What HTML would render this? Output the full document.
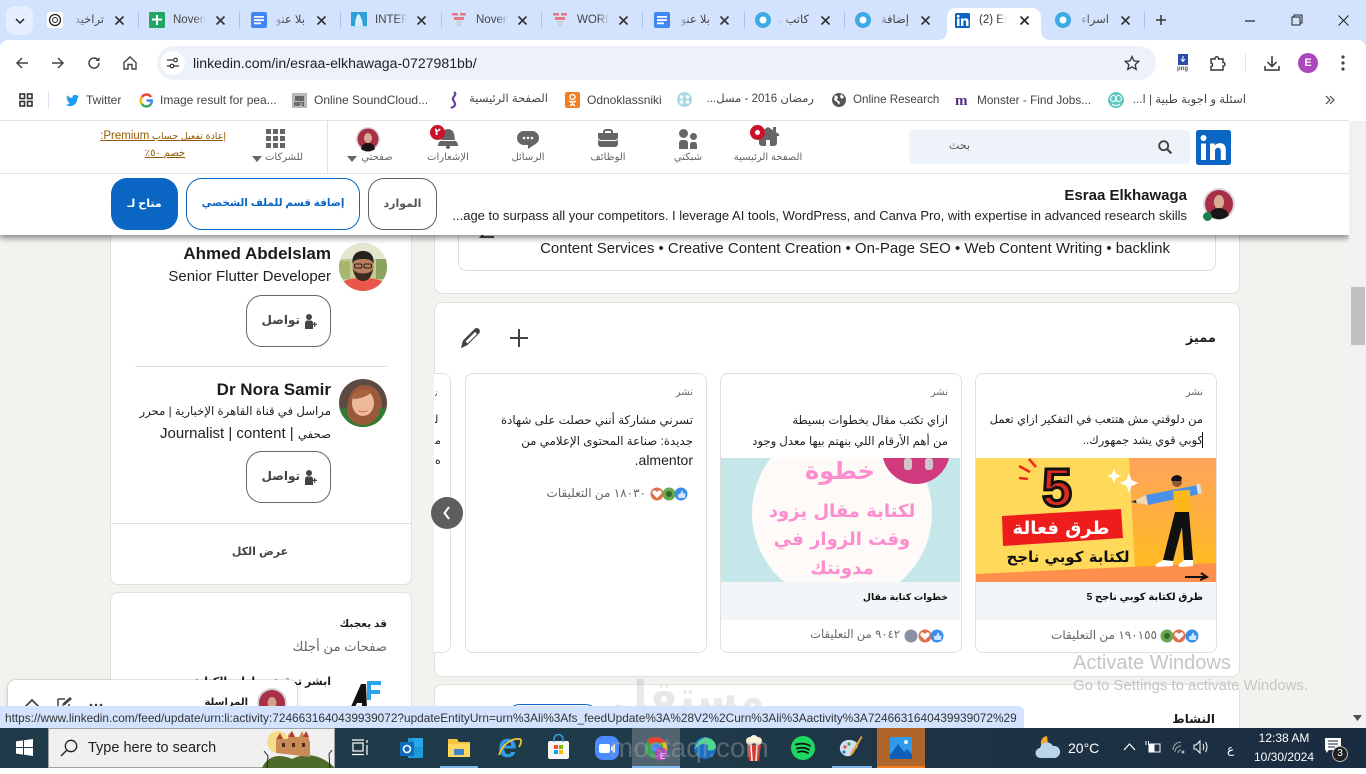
<!DOCTYPE html>
<html lang="en">
<head>
<meta charset="utf-8">
<title>LinkedIn</title>
<style>
*{box-sizing:border-box}
html,body{margin:0;padding:0;width:1366px;height:774px;overflow:hidden;background:#fff;font-family:"Liberation Sans","DejaVu Sans",sans-serif}
.a{position:absolute}
.t{position:absolute;white-space:nowrap;line-height:1.2;color:#1f1f1f}
.r{direction:rtl;text-align:right}
svg{position:absolute;overflow:visible}
.card{position:absolute;background:#fff;border:1px solid #e0dfdc;border-radius:8px}
.tabt{position:absolute;top:13px;font-size:11.5px;color:#444;white-space:nowrap;overflow:hidden;height:15px;line-height:15px}
.sep{position:absolute;top:12px;width:1px;height:16px;background:#a8c3ec}
.x{position:absolute;top:14px;width:11px;height:11px}
.fc{position:absolute;background:#fff;border:1px solid #e0dfdc;border-radius:8px;top:373px;width:242px;height:280px;overflow:hidden}
.btn{position:absolute;border:1px solid #666;border-radius:16px;background:#fff}
.nl{position:absolute;font-size:10px;color:#666;white-space:nowrap;direction:rtl;transform:translateX(-50%);top:152px}
</style>
</head>
<body>

<!-- PAGE BG -->
<div class="a" style="left:0;top:121px;width:1349px;height:607px;background:#f4f2ee"></div>

<!-- LEFT CARD 1 -->
<div class="card" style="left:110px;top:200px;width:302px;height:385px"></div>
<svg style="left:339px;top:243px" width="48" height="48" viewBox="0 0 48 48"><defs><clipPath id="c1"><circle cx="24" cy="24" r="24"/></clipPath></defs><g clip-path="url(#c1)"><rect width="48" height="48" fill="#c3cc97"/><rect width="48" height="16" fill="#e4e6cf"/><rect x="0" y="18" width="11" height="18" fill="#a8b56e"/><rect x="37" y="16" width="11" height="20" fill="#8aa35f"/><path d="M0 48V42c6-6 14-7 24-7s18 1 24 7v6z" fill="#e8574a"/><ellipse cx="24" cy="24" rx="10.500" ry="13" fill="#b97f5a"/><path d="M13.500 21c-1-9 4-13 10.500-13s11.500 4 10.500 13c-1-3-3-5-10.500-5s-9.500 2-10.500 5z" fill="#26221f"/><path d="M14 26c1.500 9 5.500 12 10 12s8.500-3 10-12c-2 3-5 4.500-10 4.500s-8-1.500-10-4.500z" fill="#3a2a20"/><rect x="15.500" y="21" width="7.500" height="4" rx="1.500" fill="none" stroke="#222"/><rect x="25" y="21" width="7.500" height="4" rx="1.500" fill="none" stroke="#222"/></g></svg>
<div class="t" style="right:1035px;top:244px;font-size:17px;font-weight:700;color:#1b1b1b">Ahmed Abdelslam</div>
<div class="t" style="right:1035px;top:268px;font-size:15px;color:#1f1f1f">Senior Flutter Developer</div>
<div class="btn" style="left:246px;top:295px;width:85px;height:52px"></div>
<div class="t r" style="left:262px;top:313px;font-size:12px;font-weight:700;color:#444;width:38px">تواصل</div>
<svg style="left:302px;top:313px" width="16" height="16" viewBox="0 0 16 16" fill="#444"><circle cx="7" cy="4" r="3"/><path d="M3 16V10c0-1.500 1-2.500 2.500-2.500h3c1.500 0 2.500 1 2.500 2.500v6z"/><path d="M12 9h1.200v1.800H15V12h-1.800v1.800H12V12h-1.800v-1.200H12z"/></svg>
<div class="a" style="left:135px;top:366px;width:252px;height:1px;background:#e0dfdc"></div>
<svg style="left:339px;top:379px" width="48" height="48" viewBox="0 0 48 48"><defs><clipPath id="c2"><circle cx="24" cy="24" r="24"/></clipPath></defs><g clip-path="url(#c2)"><rect width="48" height="48" fill="#5c4b43"/><path d="M8 48C6 20 12 6 26 6s20 14 16 42z" fill="#9a5a3a"/><ellipse cx="24" cy="24" rx="11" ry="13" fill="#edb99b"/><path d="M14 20c2-9 10-12 19-7-4 4-12 7-19 7z" fill="#a8623e"/><path d="M19 31c3 2 7 2 10 0-1 3-9 3-10 0z" fill="#c8574f"/><path d="M0 30a24 24 0 0048 0l-7-1a17 17 0 01-34 0z" fill="#2e7d32"/></g></svg>
<div class="t" style="right:1035px;top:380px;font-size:17px;font-weight:700;color:#1b1b1b">Dr Nora Samir</div>
<div class="t r" style="right:1035px;top:405px;font-size:11.700px">مراسل في قناة القاهرة الإخبارية | محرر</div>
<div class="t r" style="right:1035px;top:425px;font-size:15px"><span style="font-size:11.700px">صحفي</span> | Journalist | content</div>
<div class="btn" style="left:246px;top:451px;width:85px;height:52px"></div>
<div class="t r" style="left:262px;top:469px;font-size:12px;font-weight:700;color:#444;width:38px">تواصل</div>
<svg style="left:302px;top:469px" width="16" height="16" viewBox="0 0 16 16" fill="#444"><circle cx="7" cy="4" r="3"/><path d="M3 16V10c0-1.500 1-2.500 2.500-2.500h3c1.500 0 2.500 1 2.500 2.500v6z"/><path d="M12 9h1.200v1.800H15V12h-1.800v1.800H12V12h-1.800v-1.200H12z"/></svg>
<div class="a" style="left:111px;top:523px;width:300px;height:1px;background:#e0dfdc"></div>
<div class="t r" style="left:222px;top:546px;width:76px;text-align:center;font-size:11px;font-weight:700;color:#444">عرض الكل</div>

<!-- LEFT CARD 2 -->
<div class="card" style="left:110px;top:592px;width:302px;height:160px"></div>
<div class="t r" style="right:979px;top:618px;font-size:10.500px;font-weight:700">قد يعجبك</div>
<div class="t r" style="right:979px;top:639px;font-size:13.200px;color:#666">صفحات من أجلك</div>
<div class="t r" style="right:1035px;top:676px;font-size:11px;font-weight:700">ابشر ترقية مهارات الكتابة</div>
<svg style="left:349px;top:680px" width="32" height="32" viewBox="0 0 32 32"><path d="M1 29 12 4h5l1 25h-5v-6H8l-3 6z" fill="#111"/><path d="M18 1h14v4H22v5h9v4h-9v6h-4z" fill="#2aa4e8"/></svg>

<!-- MAIN CARD 1 (top) -->
<div class="card" style="left:434px;top:200px;width:806px;height:94px"></div>
<div class="a" style="left:458px;top:200px;width:758px;height:71px;border:1px solid #e0dfdc;border-radius:8px"></div>
<svg style="left:478px;top:228px" width="18" height="14" viewBox="0 0 18 14"><path d="M16 9H3l4-4" fill="none" stroke="#333" stroke-width="1.800"/></svg>
<div class="t" style="right:196px;top:240px;font-size:15px;color:#1f1f1f">Content Services • Creative Content Creation • On-Page SEO • Web Content Writing • backlink</div>

<!-- MAIN CARD 2 (featured) -->
<div class="card" style="left:434px;top:302px;width:806px;height:375px"></div>
<div class="t r" style="right:150px;top:330px;font-size:13px;font-weight:700;color:#1b1b1b">مميز</div>
<svg style="left:509px;top:328px" width="20" height="20" viewBox="0 0 20 20"><path d="M10 1v18M1 10h18" stroke="#444" stroke-width="2" fill="none"/></svg>
<svg style="left:460px;top:327px" width="22" height="22" viewBox="0 0 22 22"><path d="M2 20l1.500-6L15 2.500c1-1 2.500-1 3.500 0s1 2.500 0 3.500L7 17.500z" fill="#444" stroke="#444" stroke-width="1.400"/><path d="M5.500 14.500 15 5l2 2L7.500 16.500z" fill="#fff"/></svg>

<!-- FEATURED CARD A -->
<div class="fc" style="left:975px"></div>
<div class="t r" style="right:163px;top:387px;font-size:10px;color:#666">نشر</div>
<div class="t r" style="right:163px;top:410px;font-size:11.500px;line-height:21px">من دلوقتي مش هتتعب في التفكير ازاي تعمل<br>كوبي قوي يشد جمهورك..</div>
<div class="a" style="left:1202px;top:432px;width:1px;height:16px;background:#111"></div>
<svg style="left:976px;top:458px" width="240" height="124" viewBox="0 0 240 124"><defs><linearGradient id="og" x1="0" y1="0" x2="0" y2="1"><stop offset="0" stop-color="#ffa35c"/><stop offset="1" stop-color="#ffbb22"/></linearGradient><clipPath id="cl1"><rect width="240" height="124"/></clipPath></defs><g clip-path="url(#cl1)"><rect width="240" height="124" fill="#ffd95a"/><path d="M153 0H240V106L159 110z" fill="url(#og)"/><path d="M0 116 240 105V124H0z" fill="#ff8f4c"/><path d="M43 8l11 6M53 1l7 8M43 20l9 1" stroke="#f0261c" stroke-width="2.500"/><text x="81" y="48" text-anchor="middle" font-family="Liberation Sans" font-weight="700" font-size="54" fill="#d92a20" stroke="#111" stroke-width="3">5</text><path d="M138 11l2 5 5 2-5 2-2 5-2-5-5-2 5-2z" fill="#fff"/><path d="M153 15l2.500 7 7 3-7 3-2.500 7-2.500-7-7-3 7-3z" fill="#fff"/><path d="M26 58 145 51 147 80 27 88z" fill="#ef1c1c"/><text x="85" y="76" text-anchor="middle" font-family="DejaVu Sans" font-weight="700" font-size="18" fill="#fff" direction="rtl">طرق فعالة</text><text x="92" y="104" text-anchor="middle" font-family="DejaVu Sans" font-weight="700" font-size="15" fill="#111" direction="rtl">لكتابة كوبي ناجح</text><path d="M155 44 170 37 222 27 224 36 172 47z" fill="#4a90e8"/><path d="M155 44 170 37 172 47z" fill="#f4d9b0"/><path d="M155 44 160 42 160.500 45z" fill="#222"/><rect x="221" y="26" width="4" height="10" fill="#ddd" transform="rotate(-10 223 31)"/><circle cx="201" cy="24" r="5" fill="#8a5a3a"/><path d="M195 22a6 6 0 0 1 11-2l-1 3-9 0z" fill="#111"/><path d="M197 33 214 32 215 54 199 54z" fill="#fcb71b"/><path d="M199 54 187 102 197 103 206 69 208 102 217 102 213 54z" fill="#111"/><path d="M187 102l-8 5 2 2 16-1v-5zM208 102l-6 5 2 2 13-1v-6z" fill="#fff"/><path d="M209 119h22M225 115l6 4-7 3" stroke="#111" stroke-width="2" fill="none"/></g></svg>
<div class="a" style="left:976px;top:582px;width:240px;height:38px;background:#f3f6f8"></div>
<div class="t r" style="right:163px;top:592px;font-size:10px;font-weight:700;color:#111">طرق لكتابة كوبي ناجح 5</div>
<svg style="left:1160px;top:629px" width="38" height="14" viewBox="0 0 38 14"><circle cx="7" cy="7" r="6.500" fill="#6aa84f"/><circle cx="7" cy="7" r="3" fill="#2e6b2f"/><circle cx="19" cy="7" r="6.500" fill="#df704d"/><path d="M19 11l-4-4a2 2 0 013-3l1 1 1-1a2 2 0 013 3z" fill="#fff"/><circle cx="32" cy="7" r="6.500" fill="#378fe9"/><path d="M29 7h2l2-3.500 1 .5v2.500h2.500l-.5 4.500h-5l-2-.5z" fill="#d0e8ff"/></svg>
<div class="t r" style="right:209px;top:628px;font-size:12px;color:#666">١٩٠١٥٥ من التعليقات</div>

<!-- FEATURED CARD B -->
<div class="fc" style="left:720px"></div>
<div class="t r" style="right:418px;top:387px;font-size:10px;color:#666">نشر</div>
<div class="t r" style="right:418px;top:410px;font-size:11.600px;line-height:21px">ازاي تكتب مقال بخطوات بسيطة<br>من أهم الأرقام اللي بنهتم بيها معدل وجود</div>
<svg style="left:721px;top:458px" width="239" height="124" viewBox="0 0 239 124"><defs><clipPath id="cl2"><rect width="239" height="124"/></clipPath></defs><g clip-path="url(#cl2)"><rect width="239" height="124" fill="#c6e7ea"/><circle cx="121" cy="55" r="90" fill="#fdfaf8"/><circle cx="195" cy="-8" r="34" fill="#d03b80"/><rect x="183" y="0" width="8" height="12" rx="3" fill="#cfc5c8"/><rect x="204" y="0" width="8" height="12" rx="3" fill="#cfc5c8"/><g font-family="DejaVu Sans" font-weight="700" text-anchor="middle" fill="#fd8dce" direction="rtl"><text x="119" y="21" font-size="24">خطوة</text><text x="121" y="59" font-size="18">لكتابة مقال يزود</text><text x="121" y="87" font-size="18">وقت الزوار في</text><text x="121" y="116" font-size="18">مدونتك</text></g></g></svg>
<div class="a" style="left:721px;top:582px;width:239px;height:38px;background:#f3f6f8"></div>
<div class="t r" style="right:418px;top:592px;font-size:9.300px;font-weight:700;color:#111">خطوات كتابة مقال</div>
<svg style="left:905px;top:629px" width="38" height="14" viewBox="0 0 38 14"><circle cx="6" cy="7" r="6.500" fill="#8a8fa3"/><circle cx="20" cy="7" r="6.500" fill="#df704d"/><path d="M20 11l-4-4a2 2 0 013-3l1 1 1-1a2 2 0 013 3z" fill="#fff"/><circle cx="32" cy="7" r="6.500" fill="#378fe9"/><path d="M29 7h2l2-3.500 1 .5v2.500h2.500l-.5 4.500h-5l-2-.5z" fill="#d0e8ff"/></svg>
<div class="t r" style="right:466px;top:628px;font-size:11.600px;color:#666">٩٠٤٢ من التعليقات</div>

<!-- FEATURED CARD C -->
<div class="fc" style="left:465px"></div>
<div class="t r" style="right:673px;top:387px;font-size:10px;color:#666">نشر</div>
<div class="t r" style="right:673px;top:410px;font-size:11.800px;line-height:21px">تسرني مشاركة أنني حصلت على شهادة<br>جديدة: صناعة المحتوى الإعلامي من</div>
<div class="t" style="right:673px;top:452px;font-size:14px;color:#1f1f1f">.almentor</div>
<svg style="left:650px;top:487px" width="38" height="14" viewBox="0 0 38 14"><circle cx="7" cy="7" r="6.500" fill="#df704d"/><path d="M7 11l-4-4a2 2 0 013-3l1 1 1-1a2 2 0 013 3z" fill="#fff"/><circle cx="19" cy="7" r="6.500" fill="#6aa84f"/><circle cx="19" cy="7" r="3" fill="#2e6b2f"/><circle cx="31" cy="7" r="6.500" fill="#378fe9"/><path d="M28 7h2l2-3.500 1 .5v2.500h2.500l-.5 4.500h-5l-2-.5z" fill="#d0e8ff"/></svg>
<div class="t r" style="right:720px;top:486px;font-size:12px;color:#666">١٨٠٣٠ من التعليقات</div>

<!-- FEATURED CARD D partial -->
<div class="a" style="left:434px;top:373px;width:17px;height:280px;background:#fff;border:1px solid #e0dfdc;border-left:none;border-radius:0 8px 8px 0"></div>
<div class="t" style="left:435px;top:388px;font-size:10px;color:#666">ﻧ</div>
<div class="t" style="left:435px;top:414px;font-size:11px">ﻟ</div>
<div class="t" style="left:435px;top:435px;font-size:11px">ﻣ</div>
<div class="t" style="left:435px;top:455px;font-size:11px">ﻩ</div>

<!-- PREV BTN -->
<div class="a" style="left:431px;top:497px;width:32px;height:32px;border-radius:50%;background:#5e5e5e"></div>
<svg style="left:431px;top:497px" width="32" height="32" viewBox="0 0 32 32"><path d="M18 10l-4.500 6 4.500 6" fill="none" stroke="#fff" stroke-width="2"/></svg>

<!-- ACTIVITY CARD -->
<div class="card" style="left:434px;top:684px;width:806px;height:80px"></div>
<div class="t r" style="right:151px;top:712px;font-size:12px;font-weight:700;color:#1b1b1b">النشاط</div>
<div class="a" style="left:505px;top:704px;width:95px;height:30px;border:1px solid #0a66c2;border-radius:16px;background:#fff"></div>

<!-- MESSAGING OVERLAY -->
<div class="a" style="left:8px;top:680px;width:289px;height:60px;background:#fff;border-radius:8px 8px 0 0;box-shadow:0 0 0 1px rgba(0,0,0,.08),0 2px 6px rgba(0,0,0,.15)"></div>
<svg style="left:257px;top:688px" width="30" height="30" viewBox="0 0 30 30"><circle cx="15" cy="15" r="15" fill="#d5d5d5"/><circle cx="15" cy="15" r="13" fill="#a82f48"/><ellipse cx="15" cy="15" rx="4.500" ry="6" fill="#d4a184"/></svg>
<div class="t r" style="right:1118px;top:697px;font-size:10px;font-weight:700">المراسلة</div>
<svg style="left:24px;top:698px" width="16" height="10" viewBox="0 0 16 10"><path d="M1 9l7-7 7 7" fill="none" stroke="#444" stroke-width="1.800"/></svg>
<svg style="left:57px;top:696px" width="15" height="15" viewBox="0 0 15 15"><path d="M1 3h7M1 3v11h11V8" fill="none" stroke="#444" stroke-width="1.500"/><path d="M5 10l1-3 7-6 2 2-7 6z" fill="#444"/></svg>
<svg style="left:89px;top:703px" width="14" height="4" viewBox="0 0 14 4" fill="#444"><circle cx="2" cy="2" r="1.300"/><circle cx="7" cy="2" r="1.300"/><circle cx="12" cy="2" r="1.300"/></svg>

<!-- STICKY BAR + LI HEADER -->
<div class="a" style="left:0;top:174px;width:1349px;height:61px;background:#fff;box-shadow:0 3px 6px rgba(0,0,0,.45)"></div>
<div class="a" style="left:0;top:121px;width:1349px;height:52px;background:#fff"></div>
<div class="a" style="left:0;top:173px;width:1349px;height:1px;background:#e3e2df"></div>
<div class="a" style="left:0;top:120px;width:1349px;height:1px;background:#e3e3e3"></div>

<svg style="left:1196px;top:130px" width="35" height="35" viewBox="0 0 35 35"><rect width="35" height="35" rx="2.500" fill="#0a66c2"/><rect x="5" y="13.500" width="5" height="16.500" fill="#fff"/><circle cx="7.500" cy="8" r="3" fill="#fff"/><path d="M14 13.500h4.800v2.300c1-1.700 2.800-2.700 5-2.700 4.300 0 6 2.700 6 7V30h-5v-8.800c0-2-.7-3.500-2.600-3.500-2 0-3.200 1.400-3.200 3.500V30h-5z" fill="#fff"/></svg>
<div class="a" style="left:909px;top:130px;width:281px;height:34px;background:#edf3f8;border-radius:4px"></div>
<div class="t r" style="right:396px;top:140px;font-size:11px;color:#555">بحث</div>
<svg style="left:1158px;top:140px" width="14" height="14" viewBox="0 0 14 14"><circle cx="5.700" cy="5.700" r="4.500" fill="none" stroke="#444" stroke-width="1.900"/><path d="M9 9l4.300 4.300" stroke="#444" stroke-width="2.200"/></svg>

<!-- nav -->
<svg style="left:756px;top:125px" width="24" height="24" viewBox="0 0 24 24" fill="#666"><path d="M23 9v2h-2v7a3 3 0 01-3 3h-4v-6h-4v6H6a3 3 0 01-3-3v-7H1V9l11-7 5 3.180V2h3v5.090z"/></svg>
<div class="a" style="left:750px;top:125px;width:15px;height:15px;border-radius:50%;background:#cb112d"></div>
<div class="a" style="left:755px;top:130px;width:5px;height:5px;border-radius:50%;background:#fff"></div>
<div class="nl" style="left:768px">الصفحة الرئيسية</div>
<svg style="left:676px;top:127px" width="24" height="24" viewBox="0 0 24 24" fill="#666"><path d="M12 16v6H3v-6a3 3 0 013-3h3a3 3 0 013 3zm5.500-3A3.500 3.500 0 1014 9.500a3.500 3.500 0 003.500 3.500zm1 2h-2a2.500 2.500 0 00-2.500 2.500V22h7v-4.500a2.500 2.500 0 00-2.500-2.500zM7.500 2A4.500 4.500 0 1012 6.500 4.490 4.490 0 007.500 2z"/></svg>
<div class="nl" style="left:688px">شبكتي</div>
<svg style="left:596px;top:127px" width="24" height="24" viewBox="0 0 24 24" fill="#666"><path d="M17 6V5a3 3 0 00-3-3h-4a3 3 0 00-3 3v1H2v4a3 3 0 003 3h14a3 3 0 003-3V6zM9 5a1 1 0 011-1h4a1 1 0 011 1v1H9zm10 9a4 4 0 003-1.380V17a3 3 0 01-3 3H5a3 3 0 01-3-3v-4.380A4 4 0 005 14z"/></svg>
<div class="nl" style="left:608px">الوظائف</div>
<svg style="left:516px;top:127px" width="24" height="24" viewBox="0 0 24 24" fill="#666"><path d="M16 4H8a7 7 0 000 14h4v4l8.160-5.390A6.780 6.780 0 0023 11a7 7 0 00-7-7zm-8 8.250A1.250 1.250 0 119.250 11 1.250 1.250 0 018 12.250zm4 0A1.250 1.250 0 1113.250 11 1.250 1.250 0 0112 12.250zm4 0A1.250 1.250 0 1117.250 11 1.250 1.250 0 0116 12.250z"/></svg>
<div class="nl" style="left:528px">الرسائل</div>
<svg style="left:436px;top:127px" width="24" height="24" viewBox="0 0 24 24" fill="#666"><path d="M22 19h-8.280a2 2 0 11-3.440 0H2v-1a4.520 4.520 0 011.170-2.830l1-1.170h15.700l1 1.170A4.420 4.420 0 0122 18zM18.210 7.440A6.270 6.270 0 0012 2a6.270 6.270 0 00-6.210 5.440L5 13h14z"/></svg>
<div class="a" style="left:430px;top:125px;width:15px;height:15px;border-radius:50%;background:#cb112d;color:#fff;font-size:10px;font-weight:700;line-height:15px;text-align:center">٢</div>
<div class="nl" style="left:448px">الإشعارات</div>
<svg style="left:356px;top:127px" width="24" height="24" viewBox="0 0 24 24"><circle cx="12" cy="12" r="12" fill="#d8d8d8"/><circle cx="12" cy="12" r="10.500" fill="#a82f48"/><ellipse cx="12" cy="11" rx="4" ry="5" fill="#d8ac90"/><path d="M5 22c1-5 4-6 7-6s6 1 7 6a11 11 0 01-14 0z" fill="#1b1414"/></svg>
<div class="nl" style="left:377px">صفحتي</div>
<svg style="left:347px;top:156px" width="10" height="6" viewBox="0 0 10 6"><path d="M0 0h10L5 6z" fill="#666"/></svg>
<div class="a" style="left:327px;top:121px;width:1px;height:52px;background:#e3e2df"></div>
<svg style="left:266px;top:129px" width="19" height="19" viewBox="0 0 19 19" fill="#666"><rect width="5" height="5"/><rect x="7" width="5" height="5"/><rect x="14" width="5" height="5"/><rect y="7" width="5" height="5"/><rect x="7" y="7" width="5" height="5"/><rect x="14" y="7" width="5" height="5"/><rect y="14" width="5" height="5"/><rect x="7" y="14" width="5" height="5"/><rect x="14" y="14" width="5" height="5"/></svg>
<div class="nl" style="left:284px">للشركات</div>
<svg style="left:252px;top:156px" width="10" height="6" viewBox="0 0 10 6"><path d="M0 0h10L5 6z" fill="#666"/></svg>
<div class="t r" style="right:1140px;top:130px;font-size:9.500px;color:#915907;text-decoration:underline">إعادة تفعيل حساب <span style="font-size:11.500px">Premium:</span></div>
<div class="t r" style="left:135px;top:148px;width:60px;text-align:center;font-size:10px;color:#915907;text-decoration:underline">خصم ٥٠٪</div>

<!-- sticky contents -->
<svg style="left:1203px;top:188px" width="32" height="32" viewBox="0 0 32 32"><circle cx="16" cy="16" r="16" fill="#d8d8d8"/><circle cx="16" cy="16" r="14" fill="#a82f48"/><ellipse cx="16" cy="14" rx="5" ry="7" fill="#d8ac90"/><path d="M6 27c2-5 6-7 10-7s8 2 10 7a14 14 0 01-20 0z" fill="#1b1414"/></svg>
<div class="a" style="left:1203px;top:212px;width:9px;height:9px;border-radius:50%;background:#1a7f4e;border:0 solid #fff"></div>
<div class="t" style="right:179px;top:187px;font-size:15px;font-weight:700;color:#1b1b1b">Esraa Elkhawaga</div>
<div class="t" style="right:179px;top:208px;font-size:13px;color:#1f1f1f">...age to surpass all your competitors. I leverage AI tools, WordPress, and Canva Pro, with expertise in advanced research skills</div>
<div class="a" style="left:368px;top:178px;width:69px;height:52px;border:1px solid #5f5f5f;border-radius:16px;background:#fff"></div>
<div class="t r" style="left:368px;top:198px;width:69px;text-align:center;font-size:11px;font-weight:700;color:#555">الموارد</div>
<div class="a" style="left:186px;top:178px;width:174px;height:52px;border:1px solid #0a66c2;border-radius:16px;background:#fff"></div>
<div class="t r" style="left:186px;top:198px;width:174px;text-align:center;font-size:10.400px;font-weight:700;color:#0a66c2">إضافة قسم للملف الشخصي</div>
<div class="a" style="left:111px;top:178px;width:67px;height:52px;border-radius:16px;background:#0a66c2"></div>
<div class="t r" style="left:111px;top:198px;width:67px;text-align:center;font-size:11px;font-weight:700;color:#fff">متاح لـ</div>

<!-- SCROLLBAR -->
<div class="a" style="left:1349px;top:121px;width:17px;height:607px;background:#f1f1f1"></div>
<div class="a" style="left:1351px;top:287px;width:14px;height:58px;background:#c1c1c1"></div>
<svg style="left:1353px;top:715px" width="9" height="6" viewBox="0 0 9 6"><path d="M0 0h9L4.500 6z" fill="#505050"/></svg>

<!-- ACTIVATE -->
<div class="t" style="left:1073px;top:651px;font-size:20px;color:#c5c5c5">Activate Windows</div>
<div class="t" style="left:1073px;top:678px;font-size:14.900px;color:#c5c5c5">Go to Settings to activate Windows.</div>

<!-- WATERMARK UPPER -->
<div class="t r" style="left:600px;top:672px;width:165px;font-size:42px;font-weight:700;color:rgba(120,120,120,.17)">مستقل</div>

<!-- STATUS BUBBLE -->
<div class="a" style="left:0;top:706px;width:1024px;height:22px;background:#d3e3fd;border-radius:0 6px 0 0"></div>
<div class="t" style="left:5px;top:711px;font-size:11.850px;color:#333">https://www.linkedin.com/feed/update/urn:li:activity:7246631640439939072?updateEntityUrn=urn%3Ali%3Afs_feedUpdate%3A%28V2%2Curn%3Ali%3Aactivity%3A7246631640439939072%29</div>

<!-- TASKBAR -->
<div class="a" style="left:0;top:728px;width:1366px;height:40px;background:linear-gradient(90deg,#1f3b49 0%,#1f3a48 50%,#1b2b40 100%)"></div>
<svg style="left:16px;top:739px" width="17" height="17" viewBox="0 0 17 17" fill="#fff"><path d="M0 2.400 7 1.400V8H0zM8 1.300 17 0V8H8zM0 9h7v6.600L0 14.600zM8 9h9v8L8 15.700z"/></svg>
<div class="a" style="left:48px;top:728px;width:287px;height:40px;background:#f0f0f0;border:1px solid #9aa3a8"></div>
<svg style="left:60px;top:739px" width="18" height="18" viewBox="0 0 18 18"><circle cx="11" cy="7" r="5.700" fill="none" stroke="#222" stroke-width="1.300"/><path d="M7 11l-6 6" stroke="#222" stroke-width="1.300"/></svg>
<div class="t" style="left:88px;top:740px;font-size:14.500px;color:#222">Type here to search</div>
<svg style="left:262px;top:729px" width="73" height="39" viewBox="0 0 73 39"><circle cx="16" cy="13" r="11" fill="#f3dc8a"/><path d="M0 39c6-14 20-14 30-9 12-6 28-6 43 9z" fill="#4e6b2a"/><path d="M14 24V10l4-6 3 6h5V6l4-4 3 6h4l3-6 3 6 3-2 2 8v14z" fill="#c98a55"/><path d="M18 4l3 6h-6zM30 2l3 6h-6zM44 2l3 6h-6z" fill="#b13b2c"/><path d="M20 14h3v4h-3zM30 14h3v4h-3zM40 14h3v4h-3z" fill="#4a2e1c"/><path d="M5 39l1-12-4-5M68 39l-1-14 3-4" stroke="#222" fill="none"/></svg>
<svg style="left:352px;top:739px" width="17" height="17" viewBox="0 0 17 17" fill="none" stroke="#fff" stroke-width="1.200"><rect x="1" y="4" width="10" height="8"/><path d="M0 1h12M0 15.500h12M15 1v3M15 6v10"/></svg>
<svg style="left:399px;top:737px" width="26" height="22" viewBox="0 0 26 22"><path d="M9 1h15v20H9z" fill="#1c9bd8"/><path d="M14 1h10v9H14z" fill="#28a8ea"/><rect x="1" y="5" width="14" height="14" rx="1" fill="#0f6cbd"/><circle cx="8" cy="12" r="3.500" fill="none" stroke="#fff" stroke-width="1.600"/></svg>
<svg style="left:448px;top:738px" width="22" height="20" viewBox="0 0 22 20"><path d="M0 1h9l2 3h11v15H0z" fill="#f6c443"/><path d="M0 6h22v13H0z" fill="#ffd75e"/><rect x="6" y="11" width="10" height="6" fill="#3a86c8"/></svg>
<div class="t" style="left:498px;top:726px;font-size:34px;font-weight:700;font-family:'Liberation Sans';color:#2f9be0">e</div>
<svg style="left:497px;top:737px" width="26" height="22" viewBox="0 0 26 22"><path d="M2 18C5 8 14 1 23 2c2 1 1 5-1 8" fill="none" stroke="#f4c430" stroke-width="1.800"/></svg>
<svg style="left:548px;top:736px" width="21" height="23" viewBox="0 0 21 23"><rect x="0" y="5" width="21" height="18" rx="2" fill="#f6f6f6"/><path d="M6 6V3a4 4 0 019 0v3" fill="none" stroke="#3aa0dd" stroke-width="1.500"/><rect x="6" y="9" width="4" height="4" fill="#f25022"/><rect x="11" y="9" width="4" height="4" fill="#7fba00"/><rect x="6" y="14" width="4" height="4" fill="#00a4ef"/><rect x="11" y="14" width="4" height="4" fill="#ffb900"/></svg>
<svg style="left:595px;top:736px" width="24" height="24" viewBox="0 0 24 24"><rect width="24" height="24" rx="8" fill="#4a8cff"/><rect x="4" y="8" width="11" height="9" rx="2" fill="#fff"/><path d="M16 11l4-3v9l-4-3z" fill="#fff"/></svg>
<div class="a" style="left:632px;top:728px;width:48px;height:40px;background:rgba(255,255,255,.22)"></div>
<svg style="left:644px;top:736px" width="24" height="24" viewBox="0 0 24 24"><circle cx="12" cy="12" r="11" fill="#34a853"/><path d="M12 1a11 11 0 019.500 5.500H12a5.500 5.500 0 00-5 3L3 4.500A11 11 0 0112 1z" fill="#ea4335"/><path d="M21.500 6.500A11 11 0 0112 23l5-8a5.500 5.500 0 000-8.500z" fill="#fbbc05"/><circle cx="12" cy="12" r="4.500" fill="#4285f4"/><circle cx="17" cy="18" r="6.500" fill="#ab47bc"/></svg>
<div class="t" style="left:660px;top:752px;font-size:8px;color:#fff">E</div>
<svg style="left:693px;top:736px" width="24" height="24" viewBox="0 0 24 24"><circle cx="12" cy="12" r="11" fill="#1a6fc4"/><path d="M2 13C3 5 10 1 15 2c5 1 8 5 8 9-1 4-6 4-8 3-2-2 2-4-2-6-5-1-8 2-11 5z" fill="#4fd88f"/></svg>
<svg style="left:744px;top:735px" width="20" height="26" viewBox="0 0 20 26"><path d="M3 10h14l-2 16H5z" fill="#d63a2b"/><path d="M7 10l1 16M13 10l-1 16" stroke="#fff" stroke-width="1.500"/><circle cx="6" cy="6" r="4" fill="#f6eccd"/><circle cx="14" cy="6" r="4" fill="#f6eccd"/><circle cx="10" cy="4" r="4" fill="#fff4dc"/></svg>
<svg style="left:791px;top:736px" width="24" height="24" viewBox="0 0 24 24"><circle cx="12" cy="12" r="12" fill="#1ed760"/><path d="M5 8.500c5-1.500 10-1 14 1.300M6 12.500c4-1.200 8.500-.8 12 1.200M7 16c3.300-1 7-.7 10 1" fill="none" stroke="#111" stroke-width="1.800" stroke-linecap="round"/></svg>
<svg style="left:839px;top:735px" width="25" height="25" viewBox="0 0 25 25"><path d="M1 15C0 7 7 4 12 5c6 1 8 5 6 8-2 2-4 1-5 3s1 4-2 5c-5 1-9-2-10-6z" fill="#cfe3ee"/><circle cx="6" cy="12" r="1.600" fill="#e84c3d"/><circle cx="10" cy="9" r="1.600" fill="#3ea34e"/><circle cx="5" cy="17" r="1.600" fill="#2b7bd6"/><path d="M22 1l1.500 1L14 19l-3 2 .5-3z" fill="#e8a33c"/></svg>
<div class="a" style="left:877px;top:728px;width:48px;height:40px;background:#b0652a"></div>
<div class="a" style="left:877px;top:766px;width:48px;height:2px;background:#f07c1c"></div>
<svg style="left:890px;top:737px" width="22" height="22" viewBox="0 0 22 22"><rect width="22" height="22" rx="2" fill="#2f9bea"/><path d="M0 18 8 7l6 8 3-3 5 5v5H0z" fill="#0f5fb8"/><circle cx="16" cy="5" r="2" fill="#e8f6ff"/></svg>
<div class="a" style="left:440px;top:766px;width:38px;height:2px;background:#7db7ea"></div>
<div class="a" style="left:632px;top:766px;width:48px;height:2px;background:#7db7ea"></div>
<div class="a" style="left:832px;top:766px;width:40px;height:2px;background:#7db7ea"></div>

<!-- WATERMARK LOWER -->
<div class="t" style="left:610px;top:731px;font-size:28px;font-weight:400;color:rgba(170,170,170,.42)">mostaql.com</div>

<svg style="left:1035px;top:735px" width="26" height="24" viewBox="0 0 26 24"><path d="M12 1a7 7 0 00-4 12l5-4z" fill="#f4a92f"/><path d="M6 23a5 5 0 01-1-10 7 7 0 0113-2 6 6 0 012 12z" fill="#b8d3ea"/></svg>
<div class="t" style="left:1068px;top:740px;font-size:14px;color:#fff">20°C</div>
<svg style="left:1123px;top:743px" width="13" height="8" viewBox="0 0 13 8"><path d="M1 7l5.500-6L12 7" fill="none" stroke="#fff" stroke-width="1.200"/></svg>
<svg style="left:1146px;top:740px" width="15" height="14" viewBox="0 0 15 14" fill="none" stroke="#fff" stroke-width="1"><rect x="3" y="4" width="11" height="8"/><rect x="3" y="4" width="5" height="8" fill="#fff"/><path d="M0 1v4M2.500 1v4"/></svg>
<svg style="left:1172px;top:741px" width="13" height="13" viewBox="0 0 13 13" fill="none" stroke="#9aa" stroke-width="1"><path d="M1 9a8 8 0 018-8M3 11a6 6 0 016-6M6 12a3 3 0 013-3"/><circle cx="11" cy="11" r="1" fill="#fff"/></svg>
<svg style="left:1193px;top:740px" width="15" height="14" viewBox="0 0 15 14" fill="none" stroke="#fff" stroke-width="1"><path d="M1 5h2l4-4v12l-4-4H1z"/><path d="M10 4c1 1.500 1 4.500 0 6M12.500 2c2 3 2 7 0 10"/></svg>
<div class="t" style="left:1227px;top:742px;font-size:12px;color:#fff">ع</div>
<div class="t" style="left:1256px;width:56px;text-align:center;top:731px;font-size:12px;color:#fff">12:38 AM</div>
<div class="t" style="left:1250px;width:68px;text-align:center;top:750px;font-size:12px;color:#fff">10/30/2024</div>
<svg style="left:1325px;top:738px" width="16" height="15" viewBox="0 0 16 15"><path d="M0 0h16v12H4l-3 3v-3H0z" fill="#fff"/><path d="M3 3h10M3 6h10M3 9h7" stroke="#1b2b40"/></svg>
<div class="a" style="left:1332px;top:746px;width:16px;height:16px;border-radius:50%;background:#222;border:1px solid #bbb;color:#fff;font-size:10px;line-height:14px;text-align:center">3</div>

<!-- CHROME TAB STRIP -->
<div class="a" style="left:0;top:0;width:1366px;height:40px;background:#d3e3fd"></div>
<div class="a" style="left:6px;top:6px;width:27px;height:29px;background:#e6effd;border-radius:9px"></div>
<svg style="left:15px;top:18px" width="10" height="7" viewBox="0 0 10 7"><path d="M1 1l4 4 4-4" fill="none" stroke="#222" stroke-width="1.500"/></svg>
<div class="a" style="left:947px;top:8px;width:94px;height:32px;background:#fff;border-radius:9px 9px 0 0"></div>

<!-- fav icons -->
<svg style="left:47px;top:12px" width="16" height="16" viewBox="0 0 16 16"><rect width="16" height="16" rx="3" fill="#fff"/><circle cx="8" cy="8" r="5.500" fill="none" stroke="#222" stroke-width="1.300"/><circle cx="8" cy="8" r="2.500" fill="none" stroke="#222"/></svg>
<svg style="left:149px;top:12px" width="16" height="16" viewBox="0 0 16 16"><rect width="16" height="16" rx="1.500" fill="#23a566"/><path d="M7 3h2v3.500h4v2H9V13H7V8.500H3v-2h4z" fill="#fff"/></svg>
<svg style="left:251px;top:12px" width="16" height="16" viewBox="0 0 16 16"><rect width="16" height="16" rx="2" fill="#4285f4"/><path d="M3 4h10v1.800H3zM3 7.200h10V9H3zM3 10.400h7v1.800H3z" fill="#fff"/></svg>
<svg style="left:351px;top:12px" width="16" height="16" viewBox="0 0 16 16"><rect width="16" height="16" fill="#2f9fd8"/><path d="M4 14c0-4 1-10 3-12 2 0 3 4 4 6l1 6z" fill="#d9eef9"/><path d="M0 14h16v2H0z" fill="#bfe3f5"/></svg>
<svg style="left:451px;top:12px" width="16" height="16" viewBox="0 0 16 16"><g fill="#e57a84"><rect x="1" y="1" width="6" height="2.500"/><rect x="9" y="1" width="6" height="2.500"/><rect x="3" y="5" width="10" height="3"/></g><g fill="#c8d2d4"><rect x="5" y="9" width="6" height="2.500"/><rect x="6" y="12" width="4" height="2"/></g></svg>
<svg style="left:552px;top:12px" width="16" height="16" viewBox="0 0 16 16"><g fill="#e57a84"><rect x="1" y="1" width="6" height="2.500"/><rect x="9" y="1" width="6" height="2.500"/><rect x="3" y="5" width="10" height="3"/></g><g fill="#c8d2d4"><rect x="5" y="9" width="6" height="2.500"/><rect x="6" y="12" width="4" height="2"/></g></svg>
<svg style="left:654px;top:12px" width="16" height="16" viewBox="0 0 16 16"><rect width="16" height="16" rx="2" fill="#4285f4"/><path d="M3 4h10v1.800H3zM3 7.200h10V9H3zM3 10.400h7v1.800H3z" fill="#fff"/></svg>
<svg style="left:755px;top:12px" width="16" height="16" viewBox="0 0 16 16"><circle cx="8" cy="8" r="8" fill="#3fa9e5"/><circle cx="8" cy="8" r="3.500" fill="#fff"/></svg>
<svg style="left:855px;top:12px" width="16" height="16" viewBox="0 0 16 16"><circle cx="8" cy="8" r="8" fill="#3fa9e5"/><circle cx="8" cy="8" r="3.500" fill="#fff"/></svg>
<svg style="left:955px;top:13px" width="15" height="15" viewBox="0 0 15 15"><rect width="15" height="15" rx="1.500" fill="#0a66c2"/><rect x="2" y="5.500" width="2.500" height="7.500" fill="#fff"/><circle cx="3.200" cy="3.200" r="1.400" fill="#fff"/><path d="M6 5.500h2.300v1c.6-.8 1.400-1.200 2.400-1.200 2 0 2.800 1.200 2.800 3.200V13H11V9c0-1-.3-1.700-1.200-1.700-1 0-1.500.7-1.500 1.700v4H6z" fill="#fff"/></svg>
<svg style="left:1055px;top:12px" width="16" height="16" viewBox="0 0 16 16"><circle cx="8" cy="8" r="8" fill="#3fa9e5"/><circle cx="8" cy="8" r="3.500" fill="#fff"/></svg>

<!-- tab labels -->
<div class="tabt" style="left:72px;width:32px;direction:rtl;-webkit-mask-image:linear-gradient(90deg,transparent,#000 40%)">تراخيد</div>
<div class="tabt" style="left:173px;width:33px;-webkit-mask-image:linear-gradient(270deg,transparent,#000 35%)">November</div>
<div class="tabt" style="left:274px;width:31px;direction:rtl;-webkit-mask-image:linear-gradient(90deg,transparent,#000 35%)">بلا عنوان</div>
<div class="tabt" style="left:375px;width:32px;-webkit-mask-image:linear-gradient(270deg,transparent,#000 35%)">INTERNET</div>
<div class="tabt" style="left:476px;width:32px;-webkit-mask-image:linear-gradient(270deg,transparent,#000 35%)">November</div>
<div class="tabt" style="left:577px;width:32px;-webkit-mask-image:linear-gradient(270deg,transparent,#000 35%)">WORLD</div>
<div class="tabt" style="left:679px;width:31px;direction:rtl;-webkit-mask-image:linear-gradient(90deg,transparent,#000 35%)">بلا عنوان</div>
<div class="tabt" style="left:779px;width:30px;direction:rtl;-webkit-mask-image:linear-gradient(90deg,transparent,#000 35%)">كاتب محتوى</div>
<div class="tabt" style="left:878px;width:31px;direction:rtl;-webkit-mask-image:linear-gradient(90deg,transparent,#000 35%)">إضافة مقال</div>
<div class="tabt" style="left:979px;width:28px;color:#333;-webkit-mask-image:linear-gradient(270deg,transparent,#000 35%)">(2) Esraa</div>
<div class="tabt" style="left:1079px;width:30px;direction:rtl;-webkit-mask-image:linear-gradient(90deg,transparent,#000 35%)">اسراء الخواجة</div>

<!-- close x -->
<svg class="x" style="left:114px;top:15px" viewBox="0 0 11 11"><path d="M1.500 1.500l8 8M9.500 1.500l-8 8" stroke="#333" stroke-width="1.600"/></svg>
<svg class="x" style="left:215px;top:15px" viewBox="0 0 11 11"><path d="M1.500 1.500l8 8M9.500 1.500l-8 8" stroke="#333" stroke-width="1.600"/></svg>
<svg class="x" style="left:316px;top:15px" viewBox="0 0 11 11"><path d="M1.500 1.500l8 8M9.500 1.500l-8 8" stroke="#333" stroke-width="1.600"/></svg>
<svg class="x" style="left:416px;top:15px" viewBox="0 0 11 11"><path d="M1.500 1.500l8 8M9.500 1.500l-8 8" stroke="#333" stroke-width="1.600"/></svg>
<svg class="x" style="left:517px;top:15px" viewBox="0 0 11 11"><path d="M1.500 1.500l8 8M9.500 1.500l-8 8" stroke="#333" stroke-width="1.600"/></svg>
<svg class="x" style="left:618px;top:15px" viewBox="0 0 11 11"><path d="M1.500 1.500l8 8M9.500 1.500l-8 8" stroke="#333" stroke-width="1.600"/></svg>
<svg class="x" style="left:719px;top:15px" viewBox="0 0 11 11"><path d="M1.500 1.500l8 8M9.500 1.500l-8 8" stroke="#333" stroke-width="1.600"/></svg>
<svg class="x" style="left:820px;top:15px" viewBox="0 0 11 11"><path d="M1.500 1.500l8 8M9.500 1.500l-8 8" stroke="#333" stroke-width="1.600"/></svg>
<svg class="x" style="left:920px;top:15px" viewBox="0 0 11 11"><path d="M1.500 1.500l8 8M9.500 1.500l-8 8" stroke="#333" stroke-width="1.600"/></svg>
<svg class="x" style="left:1019px;top:15px" viewBox="0 0 11 11"><path d="M1.500 1.500l8 8M9.500 1.500l-8 8" stroke="#222" stroke-width="1.600"/></svg>
<svg class="x" style="left:1120px;top:15px" viewBox="0 0 11 11"><path d="M1.500 1.500l8 8M9.500 1.500l-8 8" stroke="#333" stroke-width="1.600"/></svg>

<!-- separators -->
<div class="sep" style="left:138px"></div><div class="sep" style="left:239px"></div><div class="sep" style="left:340px"></div><div class="sep" style="left:441px"></div><div class="sep" style="left:541px"></div><div class="sep" style="left:642px"></div><div class="sep" style="left:744px"></div><div class="sep" style="left:844px"></div><div class="sep" style="left:1144px"></div>
<svg style="left:1155px;top:14px" width="12" height="12" viewBox="0 0 12 12"><path d="M6 1v10M1 6h10" stroke="#333" stroke-width="1.500"/></svg>
<svg style="left:1245px;top:20px" width="10" height="2" viewBox="0 0 10 2"><path d="M0 1h10" stroke="#222" stroke-width="1.200"/></svg>
<svg style="left:1291px;top:14px" width="12" height="12" viewBox="0 0 12 12" fill="none" stroke="#222"><rect x="1" y="3" width="8" height="8" fill="#d3e3fd"/><path d="M3 3V1h8v8H9"/></svg>
<svg style="left:1338px;top:15px" width="11" height="11" viewBox="0 0 11 11"><path d="M.500.500l10 10M10.500.500l-10 10" stroke="#222"/></svg>

<!-- TOOLBAR -->
<div class="a" style="left:0;top:40px;width:1366px;height:80px;background:#fff"></div>
<div class="a" style="left:939px;top:32px;width:8px;height:8px;background:radial-gradient(circle at 0 0,transparent 7.500px,#fff 8px)"></div>
<div class="a" style="left:1041px;top:32px;width:8px;height:8px;background:radial-gradient(circle at 8px 0,transparent 7.500px,#fff 8px)"></div>
<svg style="left:0;top:40px" width="8" height="8"><path d="M0 0h8A8 8 0 000 8z" fill="#d3e3fd"/></svg>
<svg style="left:1358px;top:40px" width="8" height="8"><path d="M8 0H0a8 8 0 018 8z" fill="#d3e3fd"/></svg>
<svg style="left:15px;top:56px" width="14" height="14" viewBox="0 0 14 14"><path d="M13 7H2M7 2 2 7l5 5" fill="none" stroke="#444" stroke-width="1.500"/></svg>
<svg style="left:51px;top:56px" width="14" height="14" viewBox="0 0 14 14"><path d="M1 7h11M7 2l5 5-5 5" fill="none" stroke="#444" stroke-width="1.500"/></svg>
<svg style="left:87px;top:56px" width="14" height="14" viewBox="0 0 14 14"><path d="M12 7a5 5 0 11-1.500-3.500" fill="none" stroke="#444" stroke-width="1.500"/><path d="M12.500 1v4h-4z" fill="#444"/></svg>
<svg style="left:123px;top:56px" width="14" height="14" viewBox="0 0 14 14"><path d="M1 6.500 7 1l6 5.500V13H9V8.500H5V13H1z" fill="none" stroke="#444" stroke-width="1.400"/></svg>
<div class="a" style="left:157px;top:46px;width:999px;height:34px;background:#edf2fa;border-radius:17px"></div>
<div class="a" style="left:161px;top:51px;width:24px;height:24px;background:#fff;border-radius:50%"></div>
<svg style="left:167px;top:57px" width="12" height="12" viewBox="0 0 12 12" fill="none" stroke="#333" stroke-width="1.200"><path d="M0 3h6M0 9h3M7 9h5"/><circle cx="8.500" cy="3" r="1.800"/><circle cx="5" cy="9" r="1.800"/></svg>
<div class="t" style="left:193px;top:55px;font-size:14.100px;color:#1f1f1f">linkedin.com/in/esraa-elkhawaga-0727981bb/</div>
<svg style="left:1124px;top:55px" width="16" height="16" viewBox="0 0 16 16"><path d="M8 1.500l2 4.400 4.700.5-3.500 3.200 1 4.700L8 11.900l-4.200 2.400 1-4.700L1.300 6.400 6 5.900z" fill="none" stroke="#333" stroke-width="1.300"/></svg>
<svg style="left:1176px;top:54px" width="14" height="18" viewBox="0 0 14 18"><rect x="2" y="0" width="10" height="11" fill="#2a4ea8"/><path d="M7 2v5M5 5l2 2.500L9 5" stroke="#fff" fill="none"/><text x="1" y="16" font-size="6" font-family="Liberation Sans" font-weight="700" fill="#555">png</text></svg>
<svg style="left:1210px;top:55px" width="16" height="16" viewBox="0 0 16 16"><path d="M1 4h4c-.500-3 4-3 3.500 0H13v3.500c2.500-.5 2.500 4 0 3.500V15H1v-3.500c2 .5 2-4 0-3.500z" fill="none" stroke="#333" stroke-width="1.400"/></svg>
<div class="a" style="left:1245px;top:54px;width:1px;height:18px;background:#d8e2f2"></div>
<svg style="left:1264px;top:55px" width="16" height="16" viewBox="0 0 16 16"><path d="M8 1v10M3.500 7 8 11.500 12.500 7M1 11v4h14v-4" fill="none" stroke="#333" stroke-width="1.500"/></svg>
<div class="a" style="left:1298px;top:53px;width:20px;height:20px;border-radius:50%;background:#ab47bc;color:#fff;font-size:11px;font-weight:700;line-height:20px;text-align:center">E</div>
<svg style="left:1341px;top:55px" width="4" height="16" viewBox="0 0 4 16" fill="#444"><circle cx="2" cy="2" r="1.600"/><circle cx="2" cy="8" r="1.600"/><circle cx="2" cy="14" r="1.600"/></svg>

<!-- BOOKMARKS -->
<svg style="left:19px;top:93px" width="14" height="14" viewBox="0 0 14 14" fill="none" stroke="#333" stroke-width="1.600"><rect x="1" y="1" width="4.500" height="4.500"/><rect x="8.500" y="1" width="4.500" height="4.500"/><rect x="1" y="8.500" width="4.500" height="4.500"/><rect x="8.500" y="8.500" width="4.500" height="4.500"/></svg>
<div class="a" style="left:48px;top:92px;width:1px;height:16px;background:#d8e2f2"></div>
<svg style="left:66px;top:94px" width="13" height="12" viewBox="0 0 13 12"><path d="M13 2c-.500.3-1 .4-1.500.5.500-.3 1-.8 1.100-1.400-.5.300-1 .5-1.600.6A2.600 2.600 0 006.500 4C4.300 3.900 2.400 2.900 1 1.200c-.7 1.200-.3 2.700.8 3.500-.4 0-.8-.1-1.200-.3 0 1.300.9 2.400 2.100 2.600-.4.100-.8.100-1.200 0 .3 1.100 1.300 1.800 2.400 1.800A5.300 5.300 0 010 10.900 7.400 7.400 0 0011.400 4.300c.6-.5 1.100-1.100 1.600-2.300z" fill="#1d9bf0"/></svg>
<div class="t" style="left:86px;top:93px;font-size:12px;color:#444">Twitter</div>
<svg style="left:140px;top:94px" width="13" height="13" viewBox="0 0 13 13" fill="none" stroke-width="2.400"><path d="M11 3A5.300 5.300 0 002 3" stroke="#ea4335"/><path d="M2 3a5.300 5.300 0 000 7" stroke="#fbbc05"/><path d="M2 10a5.300 5.300 0 008.500.5" stroke="#34a853"/><path d="M10.500 10.500C11.500 9.500 12 8 11.800 6.500H6.500" stroke="#4285f4"/></svg>
<div class="t" style="left:160px;top:93px;font-size:12px;color:#444">Image result for pea...</div>
<svg style="left:292px;top:93px" width="15" height="15" viewBox="0 0 15 15"><rect width="15" height="15" fill="#b9b9b9"/><rect x="3" y="3" width="9" height="5" fill="#666"/><text x="2" y="13" font-size="5" fill="#333" font-family="Liberation Sans" font-weight="700">MP3</text></svg>
<div class="t" style="left:314px;top:93px;font-size:12px;color:#444">Online SoundCloud...</div>
<svg style="left:447px;top:91px" width="13" height="18" viewBox="0 0 13 18"><path d="M7 1c3 2 0 4-1 6-1 3 3 4 2 7-1 2-3 3-4 2" fill="none" stroke="#6a3f9e" stroke-width="2.200"/></svg>
<div class="t r" style="right:818px;top:93px;font-size:11.500px;color:#444">الصفحة الرئيسية</div>
<svg style="left:565px;top:92px" width="15" height="16" viewBox="0 0 15 16"><rect width="15" height="16" rx="2" fill="#f57c1f"/><circle cx="7.500" cy="5" r="2.500" fill="none" stroke="#fff" stroke-width="1.500"/><path d="M4 9c2 1.500 5 1.500 7 0M7.500 10v2M5 14l2.500-2 2.500 2" fill="none" stroke="#fff" stroke-width="1.500"/></svg>
<div class="t" style="left:587px;top:93px;font-size:12px;color:#444">Odnoklassniki</div>
<svg style="left:677px;top:92px" width="15" height="15" viewBox="0 0 15 15"><circle cx="7.500" cy="7.500" r="7.500" fill="#a8d8ea"/><circle cx="4.500" cy="5" r="1.800" fill="#fff"/><circle cx="10.500" cy="5" r="1.800" fill="#fff"/><circle cx="4.500" cy="10" r="1.800" fill="#fff"/><circle cx="10.500" cy="10" r="1.800" fill="#fff"/></svg>
<div class="t r" style="right:552px;top:93px;font-size:11.500px;color:#444">رمضان 2016 - مسل...</div>
<svg style="left:832px;top:93px" width="14" height="14" viewBox="0 0 14 14"><circle cx="7" cy="7" r="7" fill="#555"/><path d="M3 2l3 2-1 3 3 2-1 3-2-3-3-2zM9 1l3 3-2 2-2-2z" fill="#fff"/></svg>
<div class="t" style="left:853px;top:93px;font-size:11.600px;color:#444">Online Research</div>
<div class="t" style="left:955px;top:92px;font-size:15px;font-weight:700;color:#5b2c83;font-family:'Liberation Serif'">m</div>
<div class="t" style="left:977px;top:93px;font-size:11.800px;color:#444">Monster - Find Jobs...</div>
<svg style="left:1108px;top:92px" width="16" height="16" viewBox="0 0 16 16"><circle cx="8" cy="8" r="8" fill="#5ec9c2"/><circle cx="5.500" cy="6.500" r="3" fill="none" stroke="#fff"/><circle cx="10.500" cy="6.500" r="3" fill="none" stroke="#fff"/><path d="M4 12c2 2 6 2 8 0" stroke="#fff" fill="none"/></svg>
<div class="t r" style="right:120px;top:93px;font-size:11.700px;color:#444">اسئلة و اجوبة طبية | ا...</div>
<svg style="left:1325px;top:95px" width="10" height="10" viewBox="0 0 10 10"><path d="M1 1l4 4-4 4M5 1l4 4-4 4" fill="none" stroke="#444" stroke-width="1.200"/></svg>

<!-- BOTTOM WHITE -->
<div class="a" style="left:0;top:768px;width:1366px;height:6px;background:#fff"></div>
</body>
</html>
